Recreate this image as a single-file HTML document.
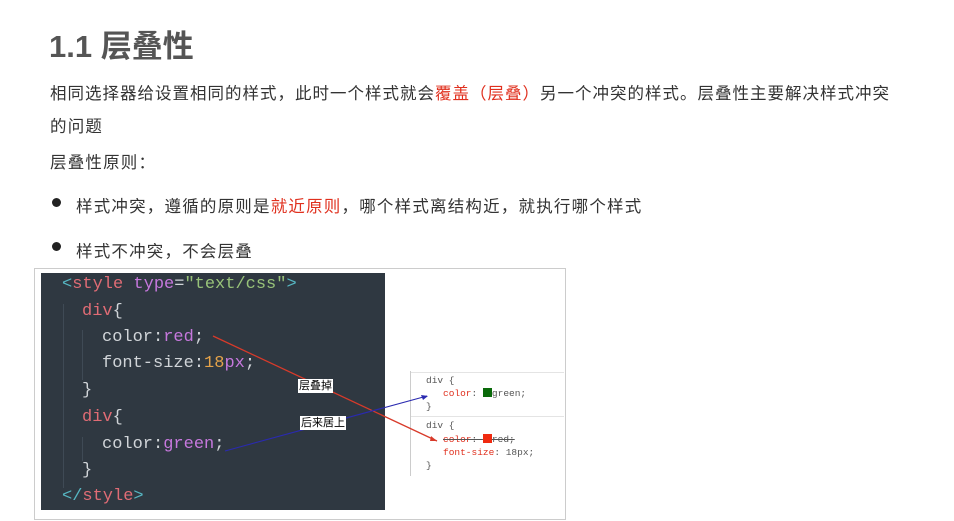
<!DOCTYPE html>
<html><head><meta charset="utf-8"><style>
body{margin:0;width:954px;height:521px;background:#fff;position:relative;overflow:hidden;font-family:"Liberation Sans","Noto Sans CJK SC",sans-serif;color:#333}
.a{position:absolute;white-space:nowrap}
.t{font-size:16.5px;color:#333;letter-spacing:1.2px}
.r{color:#e0301e}
.m{font-family:"Liberation Mono","DejaVu Sans Mono",monospace}
.code{font-size:17px;color:#d0d4d8}
.k{color:#e06c75}.s{color:#98c379}.p{color:#c678dd}.n{color:#e5a34a}.g{color:#56b6c2}
.sm{font-size:9.5px;color:#555}
</style></head><body>
<div class="a" style="left:49px;top:21px;font-size:31px;font-weight:bold;color:#555">1.1 层叠性</div>
<div class="a t" style="left:50px;top:80px;letter-spacing:1.0px">相同选择器给设置相同的样式，此时一个样式就会<span class="r">覆盖（层叠）</span>另一个冲突的样式。层叠性主要解决样式冲突</div>
<div class="a t" style="left:50px;top:113px">的问题</div>
<div class="a t" style="left:50px;top:149px">层叠性原则：</div>
<div class="a" style="left:52px;top:198px;width:9px;height:9px;border-radius:50%;background:#222"></div>
<div class="a t" style="left:76px;top:193px">样式冲突，遵循的原则是<span class="r">就近原则</span>，哪个样式离结构近，就执行哪个样式</div>
<div class="a" style="left:52px;top:242px;width:9px;height:9px;border-radius:50%;background:#222"></div>
<div class="a t" style="left:76px;top:238px">样式不冲突，不会层叠</div>
<div class="a" style="left:34px;top:268px;width:530px;height:250px;border:1px solid #ccc"></div>
<div class="a" style="left:41px;top:273px;width:344px;height:237px;background:#2f3841"></div>
<div class="a" style="left:63px;top:304px;width:1px;height:184px;background:#3f4a55"></div>
<div class="a" style="left:82px;top:330px;width:1px;height:50px;background:#3f4a55"></div>
<div class="a" style="left:82px;top:437px;width:1px;height:24px;background:#3f4a55"></div>
<div class="a m code" style="left:62px;top:275px"><span class="g">&lt;</span><span class="k">style</span> <span class="p">type</span>=<span class="s">"text/css"</span><span class="g">&gt;</span></div>
<div class="a m code" style="left:82px;top:302px"><span class="k">div</span>{</div>
<div class="a m code" style="left:102px;top:328px">color:<span class="p">red</span>;</div>
<div class="a m code" style="left:102px;top:354px">font-size:<span class="n">18</span><span class="p">px</span>;</div>
<div class="a m code" style="left:82px;top:381px">}</div>
<div class="a m code" style="left:82px;top:408px"><span class="k">div</span>{</div>
<div class="a m code" style="left:102px;top:435px">color:<span class="p">green</span>;</div>
<div class="a m code" style="left:82px;top:461px">}</div>
<div class="a m code" style="left:62px;top:487px"><span class="g">&lt;/</span><span class="k">style</span><span class="g">&gt;</span></div>
<div class="a" style="left:410px;top:371px;width:1px;height:105px;background:#ccc"></div>
<div class="a" style="left:411px;top:372px;width:153px;height:1px;background:#e4e4e4"></div>
<div class="a" style="left:411px;top:416px;width:153px;height:1px;background:#e4e4e4"></div>
<div class="a m sm" style="left:426px;top:375px">div {</div>
<div class="a m sm" style="left:443px;top:388px"><span class="r">color</span>: <span style="display:inline-block;width:9px;height:9px;background:#0a6a0a;vertical-align:-1px"></span>green;</div>
<div class="a m sm" style="left:426px;top:401px">}</div>
<div class="a m sm" style="left:426px;top:420px">div {</div>
<div class="a m sm" style="left:443px;top:434px;text-decoration:line-through"><span class="r">color</span>: <span style="display:inline-block;width:9px;height:9px;background:#f02a10;vertical-align:-1px"></span>red;</div>
<div class="a m sm" style="left:443px;top:447px"><span class="r">font-size</span>: 18px;</div>
<div class="a m sm" style="left:426px;top:460px">}</div>
<svg class="a" style="left:0;top:0" width="954" height="521">
<line x1="213" y1="336" x2="437" y2="441" stroke="#d83a2a" stroke-width="1.3"/>
<polygon points="437,441 431,436 430,441" fill="#d83a2a"/>
<line x1="225" y1="451" x2="427" y2="396" stroke="#2a2ab0" stroke-width="1.1"/>
<polygon points="428,396 421,395 423,400" fill="#2a2ab0"/>
</svg>
<div class="a" style="left:298px;top:379px;background:#fff;font-size:11px;color:#000;padding:0 1px;line-height:14px">层叠掉</div>
<div class="a" style="left:300px;top:416px;background:#fff;font-size:11px;color:#000;padding:0 1px;line-height:14px">后来居上</div>
</body></html>
